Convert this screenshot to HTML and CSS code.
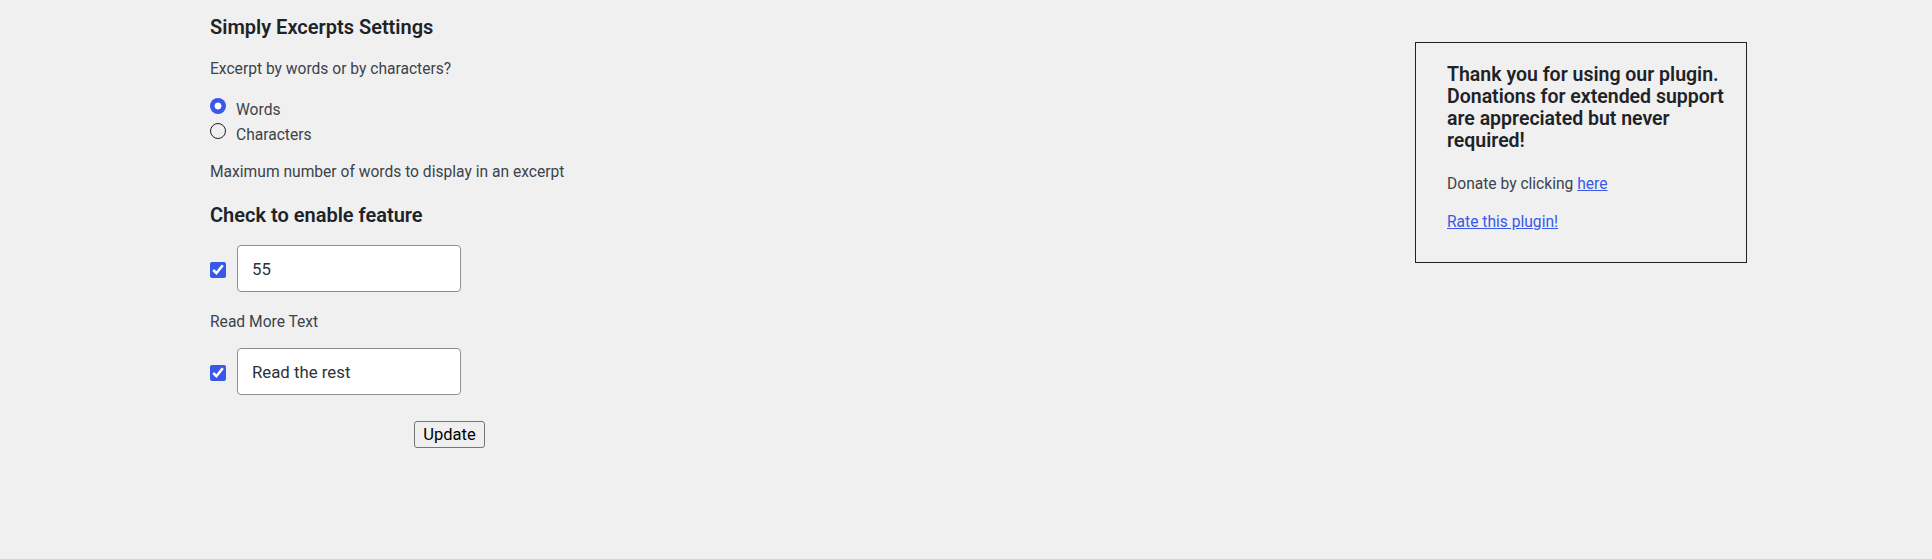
FILE: index.html
```html
<!DOCTYPE html>
<html lang="en">
<head>
<meta charset="utf-8">
<title>Simply Excerpts Settings</title>
<link rel="stylesheet" href="styles.css">
</head>
<body>
<div class="page">
  <main class="main">
    <h2 class="title">Simply Excerpts Settings</h2>
    <form class="settings">
      <p class="field-label first">Excerpt by words or by characters?</p>
      <div class="radio-group">
        <label class="radio-row"><input type="radio" name="type" checked><span>Words</span></label>
        <label class="radio-row"><input type="radio" name="type"><span>Characters</span></label>
      </div>
      <p class="field-label max">Maximum number of words to display in an excerpt</p>
      <h2 class="section">Check to enable feature</h2>
      <div class="input-row one">
        <input type="checkbox" checked>
        <input type="text" class="text-input" value="55">
      </div>
      <p class="field-label more">Read More Text</p>
      <div class="input-row two">
        <input type="checkbox" checked>
        <input type="text" class="text-input" value="Read the rest">
      </div>
      <div class="actions">
        <button type="button" class="update">Update</button>
      </div>
    </form>
  </main>
  <aside class="sidebar">
    <h3 class="thanks">Thank you for using our plugin. Donations for extended support are appreciated but never required!</h3>
    <p class="donate">Donate by clicking <a href="#">here</a></p>
    <p class="rate"><a href="#">Rate this plugin!</a></p>
  </aside>
</div>
</body>
</html>
```

FILE: styles.css
```css
html, body {
  margin: 0;
  padding: 0;
  background: #f0f0f1;
}

body {
  font-family: Roboto, "Noto Sans", "Liberation Sans", sans-serif;
  color: #3c434a;
  font-size: 15.6px;
}

.page {
  display: flex;
  align-items: flex-start;
  padding-left: 210px;
  padding-right: 185px;
}

.main {
  flex: 1;
}

.title,
.section {
  margin: 0;
  font-size: 20px;
  line-height: 26px;
  font-weight: 600;
  color: #1d2327;
}

.title {
  margin-top: 14px;
}

.section {
  margin-top: 18px;
}

.field-label {
  margin: 0;
  line-height: 23px;
}

.field-label.first {
  margin-top: 18px;
}

.field-label.max {
  margin-top: 13px;
}

.field-label.more {
  margin-top: 19px;
}

.radio-group {
  margin-top: 17px;
  display: flex;
  flex-direction: column;
}

.radio-row {
  display: flex;
  align-items: flex-start;
  height: 25px;
  line-height: 25px;
}

.radio-row input {
  -webkit-appearance: none;
  appearance: none;
  box-sizing: border-box;
  width: 16px;
  height: 16px;
  margin: 0 10px 0 0;
  border: 1px solid #1d2327;
  border-radius: 50%;
  background: transparent;
}

.radio-row input:checked {
  border: none;
  background: radial-gradient(circle, #ffffff 0 3.2px, #3858e9 3.8px);
}

.input-row {
  display: flex;
  align-items: center;
  gap: 11px;
}

.input-row.one {
  margin-top: 17px;
}

.input-row.two {
  margin-top: 14px;
}

.input-row input[type="checkbox"] {
  width: 16px;
  height: 16px;
  margin: 2px 0 0 0;
  accent-color: #3858e9;
}

.text-input {
  box-sizing: border-box;
  width: 224px;
  height: 47px;
  border: 1px solid #8c8f94;
  border-radius: 4px;
  background: #fff;
  padding: 0 14px;
  font-family: inherit;
  font-size: 16.8px;
  color: #2c3338;
}

.actions {
  margin-top: 26px;
  padding-left: 204px;
}

.update {
  box-sizing: border-box;
  width: 71px;
  height: 27px;
  padding: 0;
  font-family: inherit;
  font-size: 16.5px;
  color: #000;
  background: #efefef;
  border: 1px solid #767676;
  border-radius: 3px;
}

.sidebar {
  box-sizing: border-box;
  width: 332px;
  margin-top: 42px;
  border: 1px solid #1d2327;
  padding: 0 0 28px 31px;
}

.thanks {
  margin: 21px 0 0;
  font-size: 19.5px;
  line-height: 22px;
  font-weight: 600;
  color: #1d2327;
}

.donate,
.rate {
  margin: 0;
  line-height: 23px;
}

.donate {
  margin-top: 21px;
}

.rate {
  margin-top: 14.5px;
}

a {
  color: #3858e9;
  text-decoration: underline;
}
```
